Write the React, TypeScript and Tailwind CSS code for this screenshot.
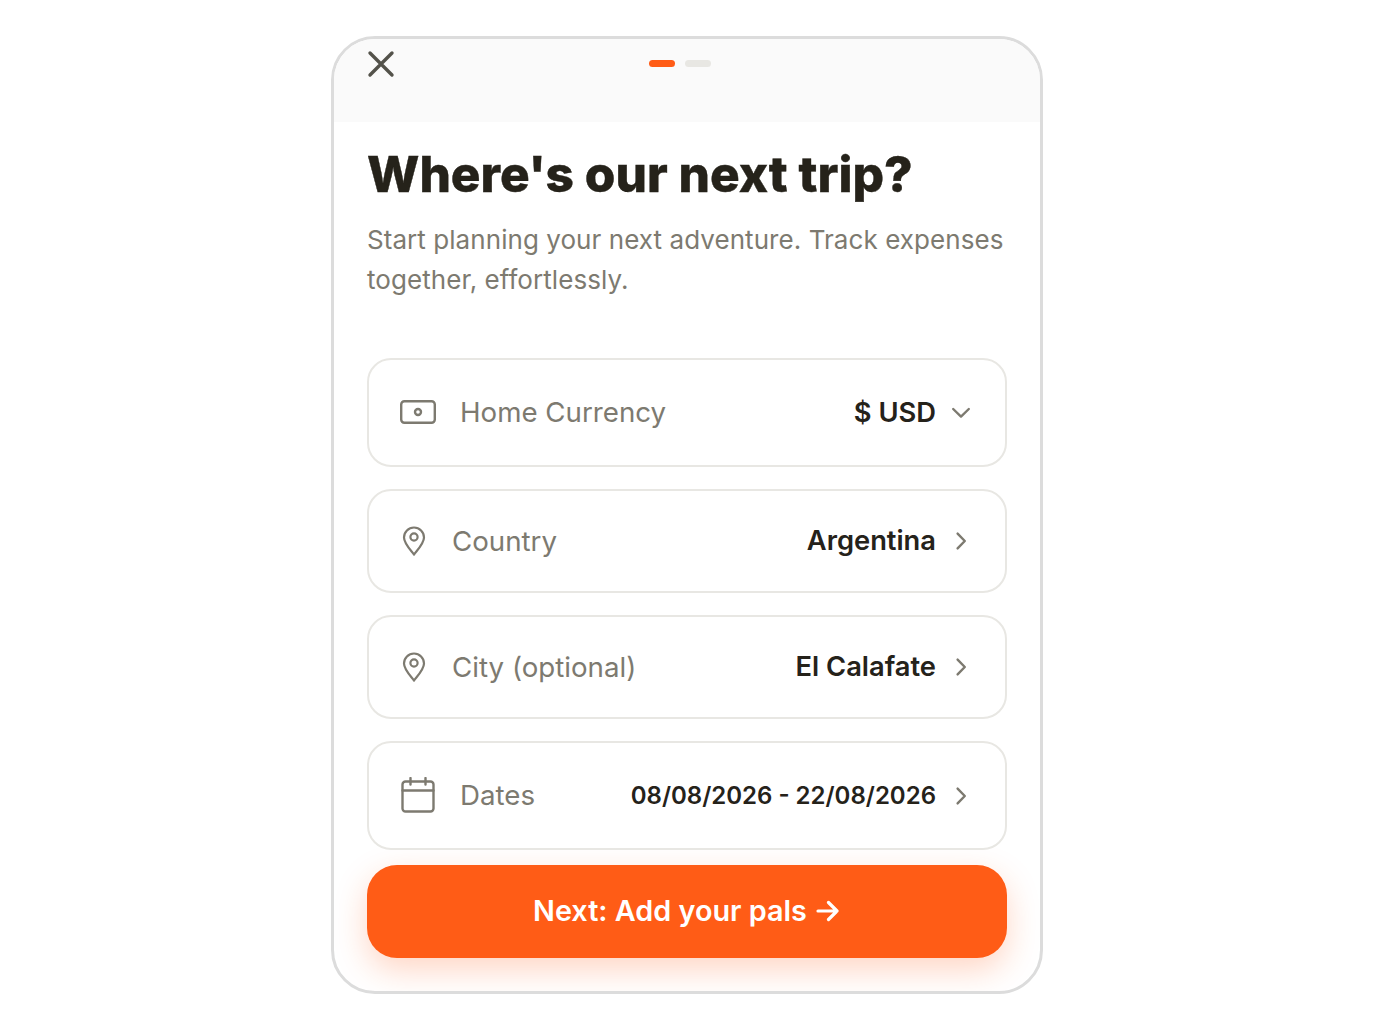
import { ReactNode } from "react";

const MUTED = "#7d7a70";

function Chevron({ down }: { down?: boolean }) {
  return (
    <svg width="24" height="24" viewBox="0 0 24 24" fill="none" stroke="#7d7a70" strokeWidth="2.4" strokeLinecap="round" strokeLinejoin="round">
      {down ? <path d="M4.2 8 12 15.6 19.8 8" /> : <path d="M8.6 4.6 15.8 12 8.6 19.4" />}
    </svg>
  );
}

function CashIcon() {
  return (
    <svg width="36" height="24" viewBox="0 0 36 24" fill="none" stroke={MUTED} strokeWidth="2.4">
      <rect x="1.2" y="1.2" width="33.6" height="21.6" rx="3.2" />
      <circle cx="18" cy="12" r="3" />
    </svg>
  );
}

function PinIcon() {
  return (
    <svg className="ml-[2px]" width="24" height="30" viewBox="0 0 24 30" fill="none" stroke={MUTED} strokeWidth="2.2" strokeLinejoin="round">
      <path d="M12 28.5C9 24.5 2 17.5 2 11.5a10 10 0 0 1 20 0c0 6-7 13-10 17Z" />
      <circle cx="12" cy="11" r="3.6" />
    </svg>
  );
}

function CalendarIcon() {
  return (
    <svg className="ml-[1px]" width="34" height="36" viewBox="0 0 34 36" fill="none" stroke={MUTED} strokeWidth="2.4" strokeLinecap="round">
      <rect x="1.5" y="4.5" width="31" height="30" rx="3" />
      <path d="M1.5 13.5h31M9.5 1v6.5M24.5 1v6.5" />
    </svg>
  );
}

function Row({ icon, label, value, tall, down, gap, tight }: { icon: ReactNode; label: string; value: string; tall?: boolean; down?: boolean; gap: string; tight?: boolean }) {
  return (
    <div className={`flex items-center justify-between rounded-[24px] border-2 border-[#e8e7e3] bg-white pl-[31px] pr-[32px] ${tall ? "h-[109px]" : "h-[104px]"}`}>
      <div className={`flex items-center ${gap}`}>
        {icon}
        <span className="pt-[1px] text-[27.7px] text-[#7d7a70]">{label}</span>
      </div>
      <div className="flex items-center gap-[13px]">
        <span className={`pt-[1px] font-semibold text-[#25221a] ${tight ? "text-[24px]" : "text-[27.3px]"}`}>{value}</span>
        <Chevron down={down} />
      </div>
    </div>
  );
}

export default function App() {
  return (
    <div className="flex min-h-[1031px] justify-center bg-white pr-[1px] pt-[36px] font-['Inter',sans-serif]">
      <div className="h-[958px] w-[712px] overflow-hidden rounded-[44px] border-[3px] border-[#dcdcdc] bg-white">
        <header className="relative h-[83px] bg-[#fafafa]">
          <svg className="absolute left-[33px] top-[11px]" width="28" height="28" viewBox="0 0 28 28" fill="none" stroke="#53524a" strokeWidth="3.4" strokeLinecap="round">
            <path d="M3 3l22 22M25 3 3 25" />
          </svg>
          <div className="flex justify-center gap-[10px] pr-[14px] pt-[21px]">
            <div className="h-[7px] w-[26px] rounded-full bg-[#ff5c16]" />
            <div className="h-[7px] w-[26px] rounded-full bg-[#e8e7e3]" />
          </div>
        </header>
        <main className="px-[33px]">
          <h1 className="mt-[22px] text-[49.5px] font-extrabold leading-[60px] text-[#25221a] [-webkit-text-stroke:0.4px_#25221a]">Where's our next trip?</h1>
          <p className="mt-[16px] text-[26px] leading-[40px] tracking-[0.06px] text-[#7d7a70]">
            Start planning your next adventure. Track expenses together, effortlessly.
          </p>
          <div className="mt-[58px] flex flex-col gap-[22px]">
            <Row icon={<CashIcon />} label="Home Currency" value="$ USD" tall down gap="gap-[24px]" />
            <Row icon={<PinIcon />} label="Country" value="Argentina" gap="gap-[26px]" />
            <Row icon={<PinIcon />} label="City (optional)" value="El Calafate" gap="gap-[26px]" />
            <Row icon={<CalendarIcon />} label="Dates" value="08/08/2026 - 22/08/2026" tall gap="gap-[25px]" tight />
          </div>
          <button className="mt-[15px] flex h-[93px] w-full items-center justify-center gap-[9px] rounded-[30px] bg-[#ff5c16] pb-[1px] pr-[2px] text-[28.8px] font-semibold text-white shadow-[0_12px_32px_rgba(255,92,22,0.25)]">
            Next: Add your pals
            <svg width="23" height="24" viewBox="0 0 23 24" fill="none" stroke="#ffffff" strokeWidth="3.2" strokeLinecap="round" strokeLinejoin="round">
              <path d="M2 12h19M12.5 3.5l8.5 8.5-8.5 8.5" />
            </svg>
          </button>
        </main>
      </div>
    </div>
  );
}
